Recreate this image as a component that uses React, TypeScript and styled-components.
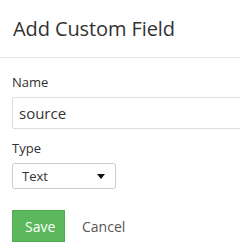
import React from "react";
import styled, { createGlobalStyle } from "styled-components";

const GlobalStyle = createGlobalStyle`
  html, body {
    margin: 0;
    padding: 0;
    background: #fff;
    overflow: hidden;
  }
  body {
    font-family: "Open Sans", "Noto Sans", sans-serif;
    color: #333;
  }
`;

const Modal = styled.div`
  width: 240px;
  height: 252px;
  overflow: hidden;
  background: #fff;
`;

const Header = styled.div`
  height: 58px;
  padding: 0 13px;
  display: flex;
  align-items: center;
  border-bottom: 1px solid #e5e5e5;
  box-sizing: border-box;
`;

const Title = styled.h4`
  margin: 0;
  font-size: 20px;
  letter-spacing: -0.1px;
  font-weight: 400;
  color: #333;
  white-space: nowrap;
`;

const Body = styled.div`
  padding: 15px 0 0 12px;
`;

const Label = styled.label`
  display: block;
  font-size: 13px;
  line-height: 18px;
  color: #333;
  margin-bottom: 6px;
`;

const Group = styled.div`
  margin-bottom: 10px;
`;

const TextInput = styled.input`
  display: block;
  width: 260px;
  height: 32px;
  box-sizing: border-box;
  border: 1px solid #ddd;
  border-radius: 2px;
  padding: 0 6px;
  font-family: inherit;
  font-size: 15px;
  color: #333;
  outline: none;
`;

const Select = styled.div`
  width: 104px;
  height: 26px;
  box-sizing: border-box;
  border: 1px solid #ccc;
  border-radius: 3px;
  display: flex;
  align-items: center;
  justify-content: space-between;
  padding: 0 10px 0 9px;
  font-size: 13px;
  color: #333;
`;

const Caret = styled.span`
  width: 0;
  height: 0;
  border-left: 4.5px solid transparent;
  border-right: 4.5px solid transparent;
  border-top: 5px solid #111;
`;

const Actions = styled.div`
  display: flex;
  align-items: center;
  gap: 16px;
  margin-top: 21px;
`;

const Button = styled.button<{ $primary?: boolean }>`
  height: 32px;
  padding: 0 12px;
  border: 1px solid ${(p) => (p.$primary ? "#4cae4c" : "transparent")};
  border-radius: 0;
  background: ${(p) => (p.$primary ? "#5cb85c" : "transparent")};
  color: ${(p) => (p.$primary ? "#fff" : "#555")};
  font-family: inherit;
  font-size: 14px;
  cursor: pointer;
  ${(p) => (p.$primary ? "width: 53px;" : "padding: 0;")}
`;

export default function App() {
  return (
    <>
      <GlobalStyle />
      <Modal>
        <Header>
          <Title>Add Custom Field</Title>
        </Header>
        <Body>
          <Group>
            <Label>Name</Label>
            <TextInput defaultValue="source" />
          </Group>
          <Group>
            <Label>Type</Label>
            <Select>
              <span>Text</span>
              <Caret />
            </Select>
          </Group>
          <Actions>
            <Button $primary>Save</Button>
            <Button>Cancel</Button>
          </Actions>
        </Body>
      </Modal>
    </>
  );
}
